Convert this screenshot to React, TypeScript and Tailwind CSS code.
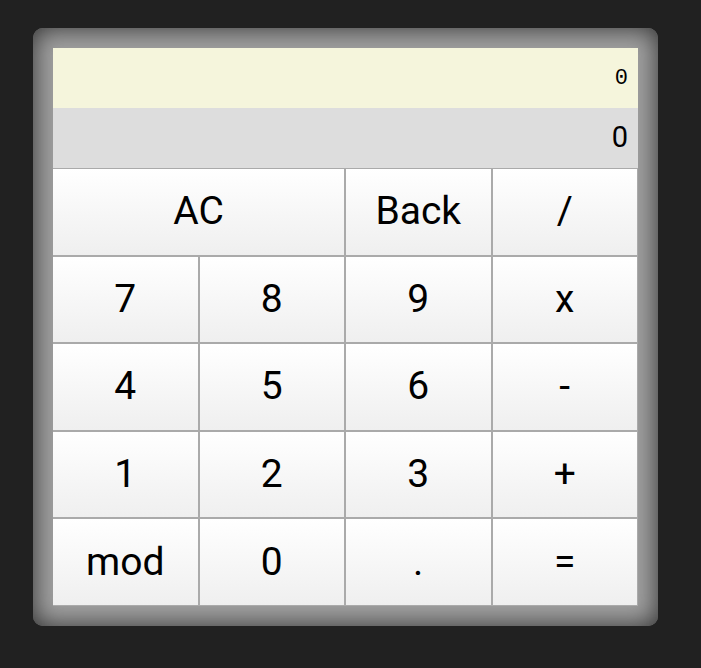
import React, { useState } from 'react';

const keys: { label: string; wide?: boolean }[] = [
  { label: 'AC', wide: true },
  { label: 'Back' },
  { label: '/' },
  { label: '7' },
  { label: '8' },
  { label: '9' },
  { label: 'x' },
  { label: '4' },
  { label: '5' },
  { label: '6' },
  { label: '-' },
  { label: '1' },
  { label: '2' },
  { label: '3' },
  { label: '+' },
  { label: 'mod' },
  { label: '0' },
  { label: '.' },
  { label: '=' },
];

const App: React.FC = () => {
  const [expr] = useState('0');
  const [result] = useState('0');

  return (
    <div className="min-h-screen w-full bg-[#212121] pt-[28px] pl-[33px]">
      <div className="w-[625px] h-[598px] p-5 rounded-[10px] bg-[#a0a0a0] shadow-[inset_0_0_26px_#2e2e2e]">
        <div className="w-[585px] flex flex-col font-['Roboto',sans-serif]">
          {/* expression line */}
          <div className="h-[60px] bg-[#f5f5dc] flex items-center justify-end pr-[10px] font-['Liberation_Mono',monospace] text-[22px] text-black">
            {expr}
          </div>
          {/* result line */}
          <div className="h-[60px] bg-[#dddddd] flex items-center justify-end pr-[10px] text-[29px] text-black">
            {result}
          </div>
          <div className="grid grid-cols-4 grid-rows-5 gap-[2px] h-[438px] bg-[#aaaaaa] pt-px pr-px pb-px">
            {keys.map((k) => (
              <button
                key={k.label}
                type="button"
                className={`flex items-center justify-center bg-gradient-to-b from-white to-[#efefef] text-[39px] text-black leading-none ${k.wide ? 'col-span-2' : ''}`}
              >
                {k.label}
              </button>
            ))}
          </div>
        </div>
      </div>
    </div>
  );
};

export default App;
